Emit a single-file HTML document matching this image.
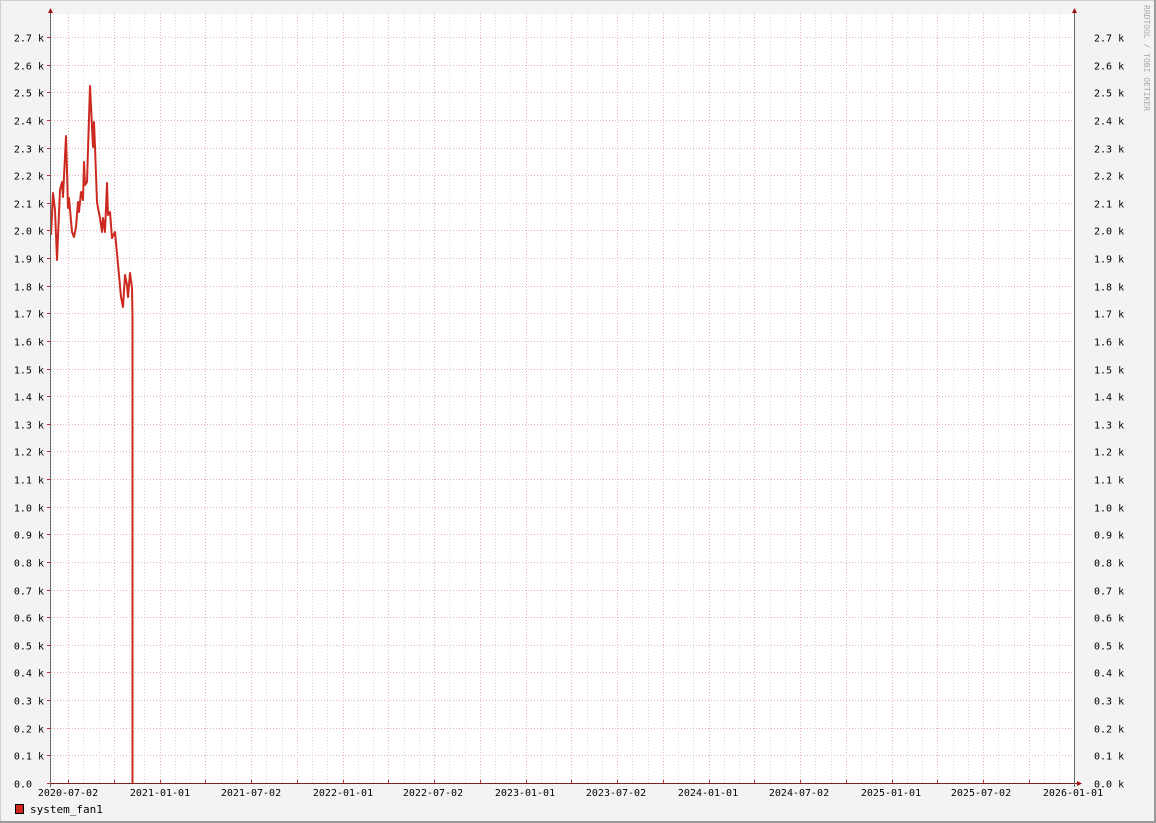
<!DOCTYPE html>
<html><head><meta charset="utf-8"><style>
html,body{margin:0;padding:0;background:#f3f3f3;}
svg{display:block;font-family:"DejaVu Sans Mono","Liberation Mono",monospace;}
</style></head><body>
<svg id="g" width="1156" height="823" xmlns="http://www.w3.org/2000/svg">
<rect x="0" y="0" width="1156" height="823" fill="#f3f3f3"/>
<rect x="0.5" y="0.5" width="1154" height="821" fill="none" stroke="#cfcfcf"/>
<line x1="1155" y1="0" x2="1155" y2="823" stroke="#9a9a9a" stroke-width="2"/>
<line x1="0" y1="822" x2="1156" y2="822" stroke="#9a9a9a" stroke-width="2"/>
<rect x="51" y="14" width="1023" height="769" fill="#fff"/>
<g id="grid"></g>
<g id="labels" font-size="10" fill="#000"></g>
<text transform="translate(1144,5) rotate(90)" font-size="8" fill="#aaa">RRDTOOL / TOBI OETIKER</text>
<polyline fill="none" stroke="#cc2a20" stroke-width="2" stroke-linejoin="round" points="51,235 53,193 55,210 57,260 60,190 62,182 63,197 66,136 68,208 69,198 72,232 74,237 76,227 78,202 79,212 81,192 83,200 84,162 85,185 87,182 90,86 93,147 94,122 95,147 97,202 98,208 100,218 102,232 103,218 105,232 107,183 108,215 110,212 112,238 115,232 119,275 121,297 123,307 125,275 127,285 128,297 130,273 132,288 132.5,318 132.5,783"/>
<line x1="51" y1="783.5" x2="1078" y2="783.5" stroke="#7a2020" stroke-width="1"/>
<line x1="50.5" y1="12" x2="50.5" y2="787" stroke="#666"/>
<line x1="1074.5" y1="12" x2="1074.5" y2="787" stroke="#666"/>
<polygon points="48,13 53,13 50.5,8" fill="#a01010"/>
<polygon points="1072,13 1077,13 1074.5,8" fill="#a01010"/>
<polygon points="1077,781 1077,786 1082,783.5" fill="#a01010"/>
<rect x="15.5" y="804.5" width="8" height="9" fill="#cc2a20" stroke="#000"/>
<text x="30" y="813" font-size="11">system_fan1</text>
</svg>
<script>
var ns="http://www.w3.org/2000/svg",g=document.getElementById("grid"),L=document.getElementById("labels");
function el(p,t,a){var e=document.createElementNS(ns,t);for(var k in a)e.setAttribute(k,a[k]);p.appendChild(e);return e;}
var x0=68,m=15.25;
for(var i=-1;i<70;i++){var x=Math.round(x0+i*m)+0.5;if(x<52||x>1073)continue;
 var maj=((i%3)+3)%3==0;
 el(g,"line",{x1:x,y1:14,x2:x,y2:783,stroke:maj?"#e4b4b4":"#dadada","stroke-dasharray":"1,2"});
 if(maj)el(g,"line",{x1:x,y1:780,x2:x,y2:783,stroke:"#c03030"});}
var dates=["2020-07-02","2021-01-01","2021-07-02","2022-01-01","2022-07-02","2023-01-01","2023-07-02","2024-01-01","2024-07-02","2025-01-01","2025-07-02","2026-01-01"];
var dx=[68,160,251,343,433,525,616,708,799,891,981,1073];
for(var j=0;j<12;j++){var t=el(L,"text",{x:dx[j],y:796,"text-anchor":"middle"});t.textContent=dates[j];}
for(var v=0;v<=27;v++){var y=Math.round(783-v*(746/27))+0.5;
 if(v>0)el(g,"line",{x1:51,y1:y,x2:1074,y2:y,stroke:"#e4b4b4","stroke-dasharray":"1,2"});
 el(g,"line",{x1:47,y1:y,x2:51,y2:y,stroke:"#c03030"});
 var s=(v/10).toFixed(1)+(v?" k":"");
 var a=el(L,"text",{x:v?44:32,y:y+4,"text-anchor":"end"});a.textContent=v?s:"0.0";
 var b=el(L,"text",{x:1094,y:y+4});b.textContent=(v/10).toFixed(1)+" k";}
</script>
</body></html>
